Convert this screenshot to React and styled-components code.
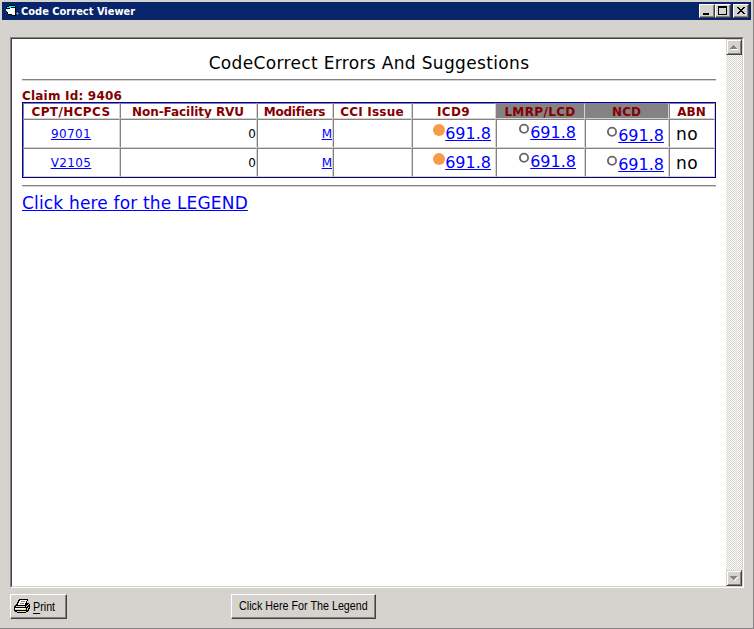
import React from "react";
import styled, { createGlobalStyle } from "styled-components";

const Global = createGlobalStyle`
  *{box-sizing:border-box}
  body{margin:0;background:#d6d3ce;font-family:"DejaVu Sans",Verdana,sans-serif;overflow:hidden}
`;
const Window = styled.div`
  width:754px;height:629px;background:#d6d3ce;
  border-right:1px solid #848284;border-bottom:1px solid #848284;
  padding:2px 2px 0 2px;display:flex;flex-direction:column;
`;
const TitleBar = styled.header`
  height:18px;flex:none;background:#08246b;display:flex;align-items:center;padding:0 2px 0 4px;
`;
const Fit = styled.span`
  display:inline-block;white-space:nowrap;letter-spacing:${p => p.$ls || 0}px;
`;
const Title = styled.h1`
  margin:0 auto 0 2px;padding-top:1px;color:#fff;font-size:11px;line-height:17px;font-weight:700;
  font-family:"DejaVu Sans Condensed","DejaVu Sans",sans-serif;font-stretch:condensed;
`;
const CaptionButton = styled.button`
  width:16px;height:14px;padding:0;display:block;background:#d6d3ce;
  border:1px solid;border-color:#fff #424142 #424142 #fff;
  box-shadow:inset -1px -1px #848284;margin-left:${p => p.$gap || 0}px;
  svg{display:block}
`;
const Viewer = styled.main`
  margin:17px 0 0 8px;width:734px;height:551px;flex:none;background:#fff;display:flex;
  border:1px solid;border-color:#848284 #fff #fff #848284;
`;
const ViewerInner = styled.div`
  flex:1;display:flex;border:1px solid;border-color:#424142 #d6d3ce #d6d3ce #424142;
`;
const Doc = styled.section`
  flex:1;padding:14px 10px 0;
`;
const Heading = styled.h2`
  margin:0;font-size:17px;font-weight:400;line-height:20px;height:26px;text-align:center;color:#000;
`;
const Rule = styled.hr`
  margin:0;height:2px;border:0;border-top:1px solid #848284;border-bottom:1px solid #d6d3ce;
`;
const Claim = styled.div`
  height:21px;padding-top:7px;font-size:12px;line-height:16px;font-weight:700;color:#840000;
`;
const Grid = styled.div`
  border:1px solid;border-color:#0000b5 #000084 #000084 #0000b5;height:76px;margin-bottom:7px;display:grid;
  grid-template-columns:97px 137px 76px 79px 84px 89px 84px 1fr;
  grid-template-rows:16px 29px 29px;
`;
const Cell = styled.div`
  border:1px solid;border-color:#848284 #d6d3ce #d6d3ce #848284;
  display:flex;justify-content:${p => p.$align || "center"};align-items:center;
  font-size:${p => p.$size || 12}px;color:#000;min-width:0;overflow:hidden;
  padding:${p => p.$pad || "0"};
`;
const HeadCell = styled(Cell)`
  font-size:12px;line-height:14px;font-weight:700;color:#840000;background:${p => p.$shade ? "#848284" : "#fff"};
  padding:2px 1px 0 0;
`;
const Link = styled.a`
  color:#00f;text-decoration:underline;text-underline-offset:1px;text-decoration-thickness:1px;
  letter-spacing:${p => p.$ls || 0}px;white-space:nowrap;line-height:1.2;text-decoration-skip-ink:none;
`;
const Dot = styled.svg`
  display:block;flex:none;margin-top:${p => p.$top}px;align-self:flex-start;
`;
const LegendLine = styled.div`
  padding-top:5px;font-size:17px;line-height:22px;
`;
const ScrollBar = styled.aside`
  width:16px;flex:none;display:flex;flex-direction:column;justify-content:space-between;
  background:repeating-conic-gradient(#d6d3ce 0 25%,#fff 0 50%) 0 0/2px 2px;
`;
const ScrollButton = styled.button`
  width:16px;height:16px;padding:0;background:#d6d3ce;border:1px solid;
  border-color:#d6d3ce #424142 #424142 #d6d3ce;
  box-shadow:inset 1px 1px #fff,inset -1px -1px #848284;
  svg{display:block}
`;
const Footer = styled.footer`
  display:flex;padding:6px 0 0 8px;align-items:flex-start;
`;
const PushButton = styled.button`
  width:${p => p.$w}px;height:25px;margin:0 ${p => p.$gap || 0}px 0 0;
  padding:0 0 0 ${p => p.$pl}px;display:flex;align-items:center;
  border:1px solid;border-color:#fff #424142 #424142 #fff;box-shadow:inset -1px -1px #848284;
  background:#d6d3ce;color:#000;font:12px "Liberation Sans",Arial,sans-serif;
  u{text-underline-offset:2px}
`;
const ButtonLabel = styled.span`
  flex:none;white-space:nowrap;transform:scaleX(.895);transform-origin:left center;
  margin:${p => p.$raised ? "-2px 0 0" : "0 0 0 2px"};
`;

const AppIcon = () => (
  <svg width="13" height="12" viewBox="0 0 13 12" shapeRendering="crispEdges">
    <path d="M0 1h3V0h6v1h1v10H6v-1H2V9H1V5H0z" fill="#000" />
    <path d="M1 2h2V1h6v1H5v1H1z" fill="#0ff" />
    <path d="M0 4h4V3h5v7H6V9H2V7H1V6H0z" fill="#fff" />
    <path d="M10 8h1V7h1v1h1v1h-1v1h-1V9h-1z" fill="#848284" />
  </svg>
);
const PrinterIcon = () => (
  <svg width="17" height="15" viewBox="0 0 17 15" shapeRendering="crispEdges">
    <path d="M5 0h9v2h-1v2h2v1h1v5h-1v2h-1v1h-2v1H3v-1H1v-1H0V7h1V6h1V5h1V3h1V1h1z" fill="#000" />
    <path d="M6 1h7v1h-1v2h-1v2H4V4h1V2h1z" fill="#fff" />
    <path d="M7 2h4v1H7zM6 4h4v1H6z" fill="#848284" />
    <path d="M2 7h9v1H2zM1 9h11v2H1zM3 12h9v1H3zM12 7h1v1h-1zM13 6h1v1h-1zM14 5h1v1h-1zM13 9h1v2h-1zM14 8h1v1h-1z" fill="#d6d3ce" />
    <path d="M1 9h10v1H1z" fill="#fff" />
    <path d="M7 10h3v1H7z" fill="#ff0" />
  </svg>
);
const Filled = () => (
  <Dot $top={4} width="12" height="12" viewBox="0 0 12 12"><circle cx="6" cy="6" r="6" fill="#f79a4a" /></Dot>
);
const Ring = ({ top }) => (
  <Dot $top={top} width="12" height="12" viewBox="0 0 12 12"><circle cx="6" cy="5.8" r="4.1" fill="#fff" stroke="#666" strokeWidth="1.8" /></Dot>
);

const HEADS = [
  ["CPT/HCPCS", 0.4], ["Non-Facility RVU", -0.05], ["Modifiers", -0.2], ["CCI Issue", 0.2],
  ["ICD9", 0.3], ["LMRP/LCD", 0.35, true], ["NCD", 0, true], ["ABN", 0],
];

const Row = ({ code }) => (
  <>
    <Cell $pad="2px 1px 0 0"><Link href="#" $ls={0.4}>{code}</Link></Cell>
    <Cell $align="flex-end"><Fit>0</Fit></Cell>
    <Cell $align="flex-end" $pad="2px 0 0 0"><Link href="#">M</Link></Cell>
    <Cell />
    <Cell $size={16} $align="flex-end" $pad="0 4px 0 0"><Filled /><Link href="#">691.8</Link></Cell>
    <Cell $size={16} $align="flex-end" $pad="0 8px 2px 0"><Ring top={3} /><Link href="#">691.8</Link></Cell>
    <Cell $size={16} $align="flex-end" $pad="4px 4px 0 0"><Ring top={2} /><Link href="#">691.8</Link></Cell>
    <Cell $size={17} $align="flex-start" $pad="0 0 0 6px"><Fit $ls={0.5}>no</Fit></Cell>
  </>
);

export default function App() {
  return (
    <>
      <Global />
      <Window>
        <TitleBar>
          <AppIcon />
          <Title><Fit>Code Correct Viewer</Fit></Title>
          <CaptionButton aria-label="Minimize"><svg width="14" height="12"><path d="M3 8h6v2H3z" /></svg></CaptionButton>
          <CaptionButton aria-label="Maximize"><svg width="14" height="12" shapeRendering="crispEdges"><path d="M2 1h9v9H2zM3 3v6h7V3z" fillRule="evenodd" /></svg></CaptionButton>
          <CaptionButton aria-label="Close" $gap={2}><svg width="14" height="12" shapeRendering="crispEdges"><path d="M3 2h2v1h1v1h2V3h1V2h2v1h-1v1H9v1H8v1h1v1h1v1h1v1H9V8H8V7H6v1H5v1H3V8h1V7h1V6h1V5H5V4H4V3H3z" /></svg></CaptionButton>
        </TitleBar>
        <Viewer>
          <ViewerInner>
            <Doc>
              <Heading><Fit $ls={0.34}>CodeCorrect Errors And Suggestions</Fit></Heading>
              <Rule />
              <Claim><Fit $ls={0.2}>Claim Id: 9406</Fit></Claim>
              <Grid>
                {HEADS.map(([t, ls, shade]) => <HeadCell key={t} $shade={shade}><Fit $ls={ls}>{t}</Fit></HeadCell>)}
                <Row code="90701" />
                <Row code="V2105" />
              </Grid>
              <Rule />
              <LegendLine><Link href="#" $ls={0.17}>Click here for the LEGEND</Link></LegendLine>
            </Doc>
            <ScrollBar>
              <ScrollButton aria-label="Scroll up"><svg width="14" height="14" shapeRendering="crispEdges"><path d="M4 9h7v1H4z" fill="#fff" /><path d="M6 5h1v1h1v1h1v1h1v1H3V8h1V7h1V6h1z" fill="#848284" /></svg></ScrollButton>
              <ScrollButton aria-label="Scroll down"><svg width="14" height="14" shapeRendering="crispEdges"><path d="M11 6v1h-1v1H9v1H8v1H7V9l3-3z" fill="#fff" /><path d="M3 5h7v1H9v1H8v1H7v1H6V8H5V7H4V6H3z" fill="#848284" /></svg></ScrollButton>
            </ScrollBar>
          </ViewerInner>
        </Viewer>
        <Footer>
          <PushButton $w={57} $pl={3} $gap={164}><PrinterIcon /><ButtonLabel><u>P</u>rint</ButtonLabel></PushButton>
          <PushButton $w={145} $pl={7}><ButtonLabel $raised>Click Here For The Legend</ButtonLabel></PushButton>
        </Footer>
      </Window>
    </>
  );
}
